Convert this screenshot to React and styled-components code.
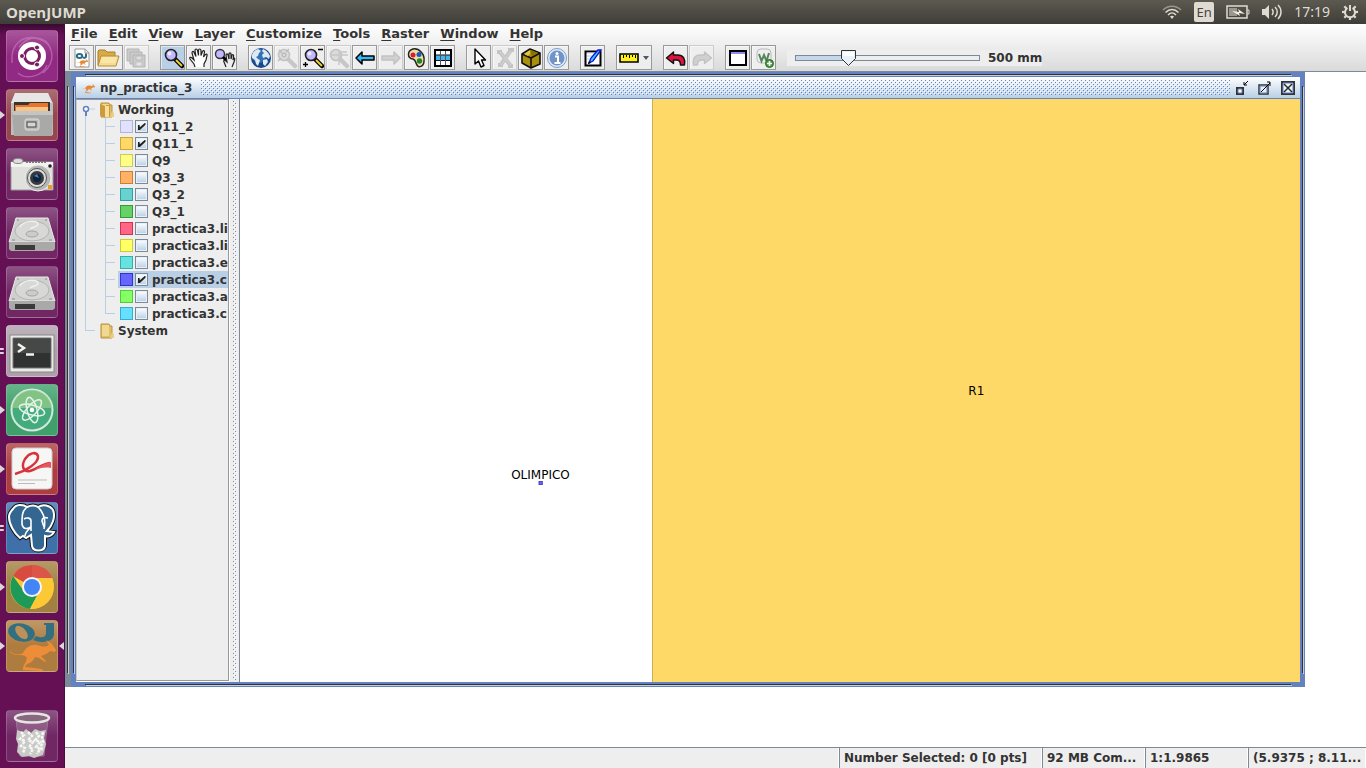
import React, { useState } from "react";
import styled, { createGlobalStyle, css } from "styled-components";

const blue = "#6382bf";
const steel = "#7a8a99";
const pale = "#b8cfe5";
const ink = "#333333";

const GlobalStyle = createGlobalStyle`
  *, *::before, *::after { box-sizing: border-box; }
  body { margin: 0; background: #fff; color: ${ink}; font: bold 12px/16px "DejaVu Sans", sans-serif; }
  button { font: inherit; color: inherit; padding: 0; margin: 0; }
  ul { list-style: none; margin: 0; padding: 0; }
  svg { display: block; flex: none; }
`;

/* Page frame */
const Shell = styled.div`
  display: flex;
  flex-direction: column;
  height: 100vh;
  overflow: hidden;
`;
const Body = styled.div`
  display: flex;
  flex: 1;
  min-height: 0;
`;
const Main = styled.main`
  display: flex;
  flex-direction: column;
  flex: 1;
  min-width: 0;
`;

/* System panel */
const Panel = styled.header`
  display: flex;
  align-items: center;
  justify-content: space-between;
  height: 24px;
  flex: none;
  padding: 0 8px 0 6px;
  color: #dfdbd2;
  background: linear-gradient(#5c5a50, #3e3d38);
`;
const PanelTitle = styled.h1`
  margin: 0;
  font: bold 15px/24px "Open Sans", sans-serif;
`;
const Indicators = styled.div`
  display: flex;
  align-items: center;
  gap: 12px;
  font: 14px/24px "Noto Sans", sans-serif;
`;
const Keyboard = styled.span`
  width: 20px;
  height: 20px;
  border-radius: 2px;
  background: #dfdbd2;
  color: #45433d;
  text-align: center;
  font: 13px/20px "Noto Sans", sans-serif;
`;

/* Launcher */
const Launcher = styled.nav`
  display: flex;
  flex-direction: column;
  gap: 7px;
  width: 65px;
  flex: none;
  padding: 6px 0;
  border-right: 1px solid #4b0c3f;
  background: linear-gradient(#3b0932, #651055 12px, #651055);
`;
const LauncherRow = styled.div`
  display: flex;
  align-items: center;
  height: 52px;
  &:last-child { margin-top: auto; }
`;
const Marks = styled.span`
  display: flex;
  flex-direction: column;
  gap: 2px;
  width: 6px;
`;
const Mark = styled.i`
  border: solid transparent;
  border-width: 4px 0 4px 5px;
  border-left-color: #dcd6da;
  ${(p) => p.$small && css`
    width: 4px;
    height: 2px;
    border: 0;
    border-radius: 0 1px 1px 0;
    background: #dcd6da;
  `}
`;
const ActiveMark = styled.i`
  margin-left: 1px;
  border: solid transparent;
  border-width: 4px 5px 4px 0;
  border-right-color: #dcd6da;
`;
const Tile = styled.button`
  width: 52px;
  height: 52px;
  border: 1px solid rgba(255, 255, 255, 0.18);
  border-radius: 4px;
  background: linear-gradient(rgba(255, 255, 255, 0.22), rgba(255, 255, 255, 0.02) 50%), ${(p) => p.$color};
  svg { margin: -1px; }
`;

/* Menus and tools */
const Top = styled.div`
  flex: none;
  background: linear-gradient(#ffffff, #dadada);
  border-bottom: 1px solid ${steel};
`;
const MenuBar = styled.nav`
  display: flex;
  align-items: flex-start;
  gap: 11px;
  height: 21px;
  padding: 0 6px;
`;
const MenuButton = styled.button`
  border: 0;
  background: none;
  font-size: 13px;
  line-height: 19px;
  &::first-letter { text-decoration: underline; text-underline-offset: 2px; }
`;
const ToolBar = styled.div`
  display: flex;
  align-items: center;
  gap: 11px;
  height: 26px;
  padding: 0 4px 1px;
`;
const ToolGroup = styled.div`
  display: flex;
  gap: 1px;
`;
const Tool = styled.button`
  display: flex;
  align-items: center;
  justify-content: center;
  gap: 4px;
  width: ${(p) => p.$width || 25}px;
  height: 25px;
  border: 1px solid #999;
  background: ${(p) => (p.$on ? pale : "#eeeeee")};
  box-shadow: inset 1px 1px #fff8;
  ${(p) => p.disabled && css`
    border-color: #ccc;
    svg { opacity: 0.75; }
  `}
`;
const Scale = styled.label`
  display: flex;
  align-items: center;
  gap: 8px;
  height: 16px;
  padding-left: 8px;
  background: #eee;
`;
const Slider = styled.span`
  position: relative;
  display: flex;
  width: 185px;
  height: 16px;
`;
const Range = styled.input`
  appearance: none;
  width: 100%;
  height: 16px;
  margin: 0;
  background: none;
  &::-webkit-slider-runnable-track {
    height: 6px;
    border: 1px solid ${steel};
    background: linear-gradient(90deg, #c5d8ec 29%, #eee 29%);
  }
  &::-webkit-slider-thumb { appearance: none; width: 15px; height: 4px; opacity: 0; }
`;
const Knob = styled.svg`
  position: absolute;
  top: 0;
  pointer-events: none;
`;

/* Desktop with its document windows */
const Desktop = styled.section`
  display: flex;
  flex: 1;
  min-height: 0;
  padding: 0 61px 60px 0;
  background: #fff;
`;
const frameLines = css`
  background-image:
    linear-gradient(#333, #333), linear-gradient(#fff9, #fff9),
    linear-gradient(#333, #333), linear-gradient(#fff9, #fff9),
    linear-gradient(#333, #333), linear-gradient(#fff9, #fff9),
    linear-gradient(#333, #333), linear-gradient(#fff9, #fff9);
  background-repeat: no-repeat;
  background-size:
    calc(100% - 28px) 1px, calc(100% - 28px) 1px,
    calc(100% - 28px) 1px, calc(100% - 28px) 1px,
    1px calc(100% - 28px), 1px calc(100% - 28px),
    1px calc(100% - 28px), 1px calc(100% - 28px);
  background-position:
    14px 2px, 15px 3px,
    14px calc(100% - 2px), 15px calc(100% - 1px),
    2px 14px, 3px 15px,
    calc(100% - 2px) 14px, calc(100% - 1px) 15px;
`;
const BackWindow = styled.div`
  display: flex;
  flex: 1;
  min-width: 0;
  padding-left: 6px;
  background-color: ${steel};
  ${frameLines}
`;
const DocWindow = styled.article`
  display: flex;
  flex-direction: column;
  flex: 1;
  min-width: 0;
  padding: 5px;
  background-color: ${blue};
  ${frameLines}
`;
const TitleBar = styled.header`
  display: flex;
  align-items: center;
  gap: 4px;
  height: 22px;
  flex: none;
  padding: 0 4px 0 5px;
  border-bottom: 1px solid ${blue};
  background: linear-gradient(#ffffff, ${pale});
`;
const Title = styled.h2`
  margin: 0;
  font-size: 12px;
  line-height: 20px;
`;
const dot = (color) => `conic-gradient(from 270deg at 1px 1px, ${color} 90deg, transparent 0)`;
const Grip = styled.span`
  flex: 1;
  height: 15px;
  margin-left: 5px;
  background: ${dot(blue)} 0 0 / 4px 4px, ${dot(blue)} 2px 2px / 4px 4px,
    ${dot("#fff")} 1px 1px / 4px 4px, ${dot("#fff")} 3px 3px / 4px 4px;
`;
const WindowButtons = styled.span`
  display: flex;
  gap: 6px;
  margin-left: 2px;
`;
const WindowButton = styled.button`
  border: 0;
  background: none;
`;
const Split = styled.div`
  display: grid;
  grid-template-columns: 153px 10px minmax(0, 1fr);
  flex: 1;
  min-height: 0;
  background: #eee;
`;
const Divider = styled.div`
  width: 4px;
  margin: 2px 0 2px 4px;
  background: ${dot(steel)} 0 0 / 4px 4px, ${dot(steel)} 2px 2px / 4px 4px,
    ${dot("#fff")} 1px 1px / 4px 4px, ${dot("#fff")} 3px 3px / 4px 4px;
`;
const Tree = styled.nav`
  overflow: hidden;
  margin-bottom: 1px;
  padding-top: 1px;
  border: 1px solid #999;
  border-left-color: #ccc;
  box-shadow: 1px 1px #fff;
  background: #eee;
`;
const TreeRow = styled.div`
  display: flex;
  align-items: center;
  height: 17px;
  padding-left: 5px;
  white-space: nowrap;
`;
const FolderLabel = styled.span`
  margin-left: 3px;
`;
const Rail = styled.i`
  flex: none;
  height: 17px;
  width: 20px;
  margin-left: 3px;
  border-left: 1px solid ${pale};
`;
const Elbow = styled.i`
  flex: none;
  height: 17px;
  width: 10px;
  margin: ${(p) => (p.$root ? "0 4px 0 3px" : "0 3px 0 0")};
  background:
    linear-gradient(${pale}, ${pale}) 0 8px / 100% 1px no-repeat,
    linear-gradient(${pale}, ${pale}) 0 0 / 1px ${(p) => (p.$last ? "9px" : "100%")} no-repeat;
`;
const LayerNode = styled.label`
  display: flex;
  align-items: center;
  flex: 1;
  gap: 2px;
  height: 17px;
  padding-left: 2px;
  background: ${(p) => (p.$selected ? pale : "none")};
`;
const LayerName = styled.span`
  margin-left: 2px;
`;
const Swatch = styled.i`
  flex: none;
  width: 13px;
  height: 13px;
  background: ${(p) => p.$fill};
  border: 1px solid ${(p) => p.$line};
`;
const Check = styled.input`
  appearance: none;
  display: grid;
  place-items: center;
  flex: none;
  width: 13px;
  height: 13px;
  margin: 0;
  border: 1px solid ${steel};
  background: linear-gradient(#fff, ${pale});
  box-shadow: inset 0 0 0 1px #e8eff7;
  &:checked::after {
    content: "";
    width: 8px;
    height: 7px;
    background: #222;
    clip-path: polygon(0 28%, 25% 28%, 30% 60%, 90% 0, 100% 0, 100% 25%, 30% 100%, 0 100%);
  }
`;
const MapView = styled.div`
  display: flex;
  min-width: 0;
  border-left: 1px solid ${steel};
  background: #fff;
  color: #000;
  font-weight: normal;
`;
const Region = styled.div`
  display: flex;
  align-items: center;
  justify-content: center;
  flex: 648;
  border-left: 1px solid #ccae54;
  background: #ffd968;
`;
const Blank = styled.div`
  position: relative;
  flex: 412;
`;
const Feature = styled.span`
  position: absolute;
  left: 73%;
  top: 63%;
  display: flex;
  flex-direction: column;
  align-items: center;
  padding-top: 4px;
  line-height: 11px;
  transform: translateX(-50%);
`;
const Point = styled.i`
  width: 4px;
  height: 4px;
  border: 1px solid #4a4ac8;
  background: #6666ff;
`;

/* Status */
const StatusBar = styled.footer`
  display: grid;
  grid-template-columns: 1fr 203px 103px 103px 118px;
  height: 21px;
  flex: none;
  border-top: 1px solid ${steel};
  background: #eee;
`;
const StatusCell = styled.span`
  overflow: hidden;
  padding: 0 4px;
  border-right: 1px solid #fff;
  border-left: 1px solid ${steel};
  line-height: 20px;
  white-space: nowrap;
  &:first-child { border-left: 0; }
`;

/* Icons: toolbar */
const Ico = ({ children, w = 22, h = 22 }) => (
  <svg width={w} height={h} viewBox={`0 0 ${w} ${h}`} fill="none" aria-hidden="true">{children}</svg>
);
const Lens = ({ x = 0, y = 0, off }) => (
  <g transform={`translate(${x} ${y})`}>
    <path d="M12 12l7 7" stroke={off ? "#bbb" : "#000"} strokeWidth="4.500" strokeLinecap="round" />
    {!off && <path d="M13 13l6 6" stroke="#f3cf2d" strokeWidth="2" />}
    <circle cx="8" cy="8" r="5.500" fill={off ? "#d5d5d5" : "#c3b8ff"} stroke={off ? "#b5b5b5" : "#222"} strokeWidth="1.600" />
    {!off && <circle cx="6.500" cy="6.500" r="2" fill="#eeeaff" />}
  </g>
);
const Hand = () => (
  <path d="M7 20l-1-3-4-5c-1-2 1-2 2-1l2 2-2-7c0-2 2-2 2-.500l2 4-1-6c0-2 2-2 2.500 0l1 5V3.500c0-2 2-2 2.500 0v5l1.500-4c1-1.500 2-1 2 .500l-1 5 2-2.500c1-1 2 0 1.500 1L18 13l-2 4v3" fill="#fff" stroke="#222" strokeWidth="1.200" />
);
const Arrow = ({ off, flip }) => (
  <g transform={flip ? "matrix(-1 0 0 1 22 0)" : undefined}>
    <path d="M2 11l6-6v4h12v4H8v4z" fill={off ? "#c8c8c8" : "#39b5f5"} stroke={off ? "#b4b4b4" : "#000"} strokeWidth="1.500" strokeLinejoin="round" />
  </g>
);
const Curl = ({ off, flip }) => (
  <g transform={flip ? "matrix(-1 0 0 1 22 0)" : undefined}>
    <path d="M1.500 11l7-6v3h4c6 0 8 4 7 10h-4c0-3-1-5-4-5h-3v3.500z" fill={off ? "#c6c6c6" : "#dc143c"} stroke={off ? "#b4b4b4" : "#111"} strokeWidth="1.400" strokeLinejoin="round" />
  </g>
);
const Roo = ({ s = 1, x = 0, y = 0, c = "#e88a34" }) => (
  <path transform={`translate(${x} ${y}) scale(${s})`} fill={c}
    d="M0 10c3 4 9 6 14 3 3-6 8-9 14-8 4 1 8 3 12 0l-3-5 6 4 4 6-1 2-5-1c-3 3-6 4-9 5l5 5-1 1-6-4-4-1c-2 4-4 6-8 7l-2 3 17 2 1 2-20-1c-1-3 3-7 4-12-2-3-5-3-8-3-5 0-9-2-10-5z" />
);
const icons = {
  fresh: <><path d="M4 2h10l4 4v14H4z" fill="#fff" stroke="#999" /><path d="M14 2v4h4" stroke="#999" /><ellipse cx="8.500" cy="9" rx="2.700" ry="2" stroke="#2e6e84" strokeWidth="2" /><path d="M15 6.500V9c0 2-1 2-3 1.500" stroke="#2e6e84" strokeWidth="2" /><Roo s={0.26} x={5} y={12} /></>,
  open: <><path d="M1 18V4l1-1h6l2 2h8v4" fill="#d9ab45" stroke="#a88031" /><path d="M4 9h18l-3 10H1z" fill="#f7dc8c" stroke="#b48d3d" /><path d="M5 10h15l-2 6H3z" fill="#fbe9b4" opacity=".7" /></>,
  save: <>{[0, 3, 6].map((d) => <path key={d} d={`M${1 + d} ${2 + d}h12v12H${1 + d}z`} fill="#c0c0c0" stroke="#a2a2a2" />)}<path d="M10 9h6v4h-6z" fill="#d8d8d8" stroke="#aaa" /><path d="M10 15h6v4h-6z" fill="#e3e3e3" stroke="#b5b5b5" /></>,
  zoom: <Lens x={1} />,
  pan: <Hand />,
  zoompan: <><circle cx="6" cy="7" r="4.500" fill="#c3b8ff" stroke="#333" strokeWidth="1.400" /><path d="M9 10l3 3" stroke="#000" strokeWidth="3" /><path d="M12 20l-2-5c-1-2 1-2 2-1l1 1-1-7c0-1.500 2-1.500 2 0l1 4V7c0-1.500 2-1.500 2 0v5l1-4c1-1 2 0 1.500 1.500L19 13l1-2c1 0 1 1 0 4l-2 5" fill="#eee" stroke="#222" strokeWidth="1.200" /></>,
  globe: <><circle cx="11" cy="11" r="10" fill="#17498c" /><circle cx="9" cy="9" r="7" fill="#3f83c9" opacity=".7" /><path d="M2 8c1-3 3-5 6-6l3 2-2 2-1 3-2 1 2 2 2 1-1 3-1 3-2-2-1-4-3-2zM13 2c3 1 5 3 7 7l-1 3-3-2-3 1-1-3 2-2-2-2zM13 13l4-1 1 3-3 4-2-2z" fill="#dfe9f1" /></>,
  zoomsel: <><Lens off /><circle cx="8" cy="8" r="2" stroke="#999" /><path d="M3 3l3 3m4-1l3-3M5 11l-3 3" stroke="#aaa" strokeWidth="1.300" /></>,
  zoominout: <><Lens x={1} /><path d="M16 2.500h5M1 17.500h5M3.500 15v5" stroke="#000" strokeWidth="1.300" /></>,
  zoomregion: <><Lens off /><path d="M2 8h18M11 5v13M11 5h8" stroke="#bbb" strokeWidth="1.500" /></>,
  back: <Arrow />,
  next: <Arrow flip off />,
  palette: <><path d="M7 2C13 1 19 7 18 14c0 6-6 7-7 4-2-3-1-5-4-6C1 11 1 4 7 2z" fill="#f0df9c" stroke="#222" strokeWidth="1.500" /><circle cx="7" cy="8" r="2.500" fill="#d81b41" /><circle cx="13" cy="7.500" r="2.500" fill="#1e56c5" /><circle cx="13.500" cy="14" r="2.700" fill="#20872b" /></>,
  table: <><path d="M3 3h16v16H3z" fill="#fff" stroke="#000" strokeWidth="2" /><path d="M4 8h14v5H4z" fill="#43b5ee" /><path d="M3 8h16M3 13.500h16" stroke="#111" /><path d="M8.500 4v14M13.500 4v14" stroke="#555" /></>,
  cursor: <path d="M7 2v15l3.500-3 2.500 6 3-1.500-2.500-5.500h4z" fill="#fff" stroke="#000" strokeWidth="1.400" strokeLinejoin="round" />,
  cut: <><path d="M5 4l12 15M17 3L6 19M3 5h5M14 3h6M4 18h5M14 19h5" stroke="#b8b8b8" strokeWidth="4" /><path d="M6 5l11 13M17 4L7 18" stroke="#ccc" /></>,
  box: <><path d="M2 7l8-5 10 4v11l-9 4-9-5z" fill="#ab8f09" stroke="#111" strokeWidth="1.600" strokeLinejoin="round" /><path d="M2 7l9 4 9-5M11 11v10" stroke="#111" strokeWidth="1.600" /><path d="M4 7l6-4v4l-2 2z" fill="#dfc743" /><path d="M11 3l7 3-6 3-1-2z" fill="#8b7303" /></>,
  info: <><circle cx="11" cy="11" r="9.500" fill="#e1eaf5" stroke="#7b9dcc" /><circle cx="11" cy="11" r="7.500" fill="#6f94c8" /><path d="M9 9.500h3V16m-3.500 0h6" stroke="#fff" strokeWidth="2" /><circle cx="11" cy="6.500" r="1.500" fill="#fff" /></>,
  edit: <><path d="M3.500 4.500h15v14h-15z" fill="#fff" stroke="#000" strokeWidth="2" /><path d="M5 6h9M5 9h6M5 12h3" stroke="#bcd" /><path d="M16 3h3l-8 11-4 2 2-5z" fill="#36d0f6" stroke="#1010d8" strokeWidth="1.300" /><path d="M6 17l3-1-2-2z" fill="#000" /></>,
  undo: <Curl />,
  redo: <Curl flip off />,
  windowed: <><path d="M3 4h16v14H3z" fill="#fff" stroke="#000" strokeWidth="2" /><path d="M4 6h14" stroke="#8d8df0" strokeWidth="2" /></>,
  wizard: <><rect x="4" y="2" width="14" height="14" rx="4" fill="#eee" stroke="#bbb" /><path d="M6 7l2.500 7 2.500-6 2.500 6L16 6" stroke="#55855c" strokeWidth="2" /><circle cx="16.500" cy="16.500" r="4" fill="#45963b" stroke="#2c7026" /><path d="M14 16.500h5M16.500 14v5" stroke="#fff" strokeWidth="1.600" /></>,
};
const Ruler = () => (
  <Ico w={20}>
    <path d="M1 7h18v8H1z" fill="#fff11c" stroke="#000" strokeWidth="1.600" />
    <path d="M4.500 8v3M7.500 8v2M10.500 8v3M13.500 8v2M16.500 8v3" stroke="#000" />
  </Ico>
);
const Caret = () => <svg width="6" height="4" viewBox="0 0 6 4" aria-hidden="true"><path d="M0 0h6L3 4z" fill="#4d5966" /></svg>;

/* Icons: launcher */
const Drive = () => (
  <>
    <path d="M10 11h32l7 24H3z" fill="#cfcfce" stroke="#e8e8e8" />
    <path d="M3 35h46v7l-2 2H5l-2-2z" fill="#a9a9a8" />
    <path d="M9 38h20v5H9z" fill="#3a3a3a" />
    <ellipse cx="26" cy="24" rx="17" ry="10" fill="#d8d8d7" stroke="#b4b4b3" />
    <ellipse cx="26" cy="27" rx="6" ry="3" fill="#ccc" stroke="#a5a5a5" />
    <path d="M14 20c3-7 18-7 18-3 0 3-6 3-8 5" stroke="#f0f0ef" strokeWidth="1.500" />
    <path d="M6 33h3M43 33h3M11 13h2M39 13h2" stroke="#8c8c8c" />
  </>
);
const elephant = "M7 7c3-5 10-5 14-2 4-2 8-2 11 0 5-3 12-2 15 3 3 7-1 16-6 21l7 1c-2 4-6 5-9 4v10c-1 6-12 6-13 0l-1-11-5 3-3-2-3 2C8 31 3 22 3 15c0-3 2-6 4-8z";
const apps = [
  { name: "Dash", color: "#8f2680", art: <><path d="M6 33C4 14 17 4 33 9s17 23 4 34M45 20C40 4 22 5 13 17M12 43c8 7 24 4 29-8" stroke="#d083c5" strokeWidth="1.500" opacity=".55" /><circle cx="26" cy="26" r="14" fill="#fff" /><circle cx="26" cy="26" r="7.500" stroke="#7a2060" strokeWidth="3" />{[[16, 26], [31, 17.500], [31, 34.500]].map(([x, y]) => <circle key={`${x}${y}`} cx={x} cy={y} r="2.500" fill="#7a2060" stroke="#fff" />)}</> },
  { name: "Files", color: "#95424b", marks: 1, art: <><path d="M9 4h33l5 10v32H5V14z" fill="#bdbdbb" /><path d="M9 4h33l4 10H5z" fill="#e6e6e4" /><path d="M8 13h36v12H8z" fill="#3a3531" /><path d="M9 16h13l2-2h18v9H9z" fill="#e9742c" /><path d="M10 18h32v4H10z" fill="#f7c489" /><path d="M6 22h41l-1 25H8z" fill="#a9a9a7" /><path d="M6 22h41v4H7z" fill="#c4c4c2" /><rect x="19" y="30" width="14" height="11" rx="2" fill="#bbb" stroke="#ddd" /><rect x="21" y="33" width="9" height="5" fill="#d5d5d5" stroke="#444" /></> },
  { name: "Camera", color: "#6d2361", art: <><path d="M5 14h42v28H5z" fill="#e0e0dd" stroke="#999" /><path d="M5 14h42v5H5z" fill="#f2f2ee" /><ellipse cx="12" cy="13" rx="5" ry="2.500" fill="#ddd" stroke="#888" /><path d="M20 14h20" stroke="#777" strokeDasharray="2 1" strokeWidth="2" /><circle cx="32" cy="30" r="13" fill="#b6b6b4" stroke="#eee" /><circle cx="31" cy="30" r="9.500" fill="#dcdcda" stroke="#555" /><circle cx="31" cy="30" r="7" fill="#37393c" /><circle cx="31" cy="30" r="4" fill="#0d2241" /><path d="M28 28l3-2 2 4z" fill="#4b84bd" /><circle cx="44" cy="18" r="1.800" fill="#222" /><path d="M42 37h4v4h-4z" fill="#eb9a23" /></> },
  { name: "Disk 1", color: "#6d2361", art: <Drive /> },
  { name: "Disk 2", color: "#6d2361", art: <Drive /> },
  { name: "Terminal", color: "#ac9da9", marks: 2, art: <><path d="M4 10h44v37H4z" fill="#e8e8e4" stroke="#888" /><path d="M7 13h38v30H7z" fill="#303231" stroke="#777" /><path d="M8 14h36v14H8z" fill="#454847" /><path d="M12 19l6 4-6 4" stroke="#f3f3ee" strokeWidth="2.500" /><path d="M20 29.500h8" stroke="#f3f3ee" strokeWidth="2.500" /></> },
  { name: "Atom", color: "#3c9e68", marks: 1, art: <><circle cx="26" cy="26" r="20.500" fill="#43ab7e" stroke="#d5e8df" strokeWidth="2" /><path d="M6 24C8 0 44 0 46 24z" fill="#a1cf89" opacity=".65" />{[15, 75, 132].map((a) => <ellipse key={a} cx="26" cy="26" rx="13" ry="5" transform={`rotate(${a} 26 26)`} stroke="#e2f4ea" strokeWidth="1.500" />)}<circle cx="26" cy="26" r="2.300" fill="#fff" /></> },
  { name: "Evince", color: "#ab393a", marks: 1, art: <><rect x="6" y="5" width="40" height="41" rx="4" fill="#f6f6f5" stroke="#ccc" /><path d="M9 31C20 28 33 20 32 13c-2-5-9-3-13 3-4 7-2 13 5 12 8-2 11-7 20-8" stroke="#d8333c" strokeWidth="2.500" /><path d="M28 27c5-3 9-6 17-8v6c-6-1-11 0-17 2z" fill="#e5565c" /><path d="M12 37h29M12 40.500h17" stroke="#bbb" /></> },
  { name: "pgAdmin", color: "#3c6da8", marks: 2, art: <><path d={elephant} fill="#336791" stroke="#111" strokeWidth="4" /><path d={elephant} fill="#336791" stroke="#fff" strokeWidth="2" /><path d="M21 5c-5 4-5 9-5 17 1 6 6 5 9 3-3 3-6 5-6 9M32 5c6 6 8 13 6 22M18 17c3-2 7-1 7 2v10M42 16c-4-1-6 0-6 3l2 6" stroke="#fff" strokeWidth="1.600" /></> },
  { name: "Chrome", color: "#a07d3d", marks: 1, art: <><circle cx="26" cy="26" r="22" fill="#fcc934" /><path d="M26 26L7 15C15-1 40 1 46 17z" fill="#d74b40" /><path d="M26 4c9 0 17 5 20 13H26z" fill="#db5549" /><path d="M7 15c-8 16 3 31 17 33l9-17-13 2z" fill="#1d9a58" /><path d="M26 17h20c6 16-6 32-22 31l9-17z" fill="#fcc934" /><circle cx="26" cy="26" r="10" fill="#f5f5f5" /><circle cx="26" cy="26" r="8" fill="#4285f4" /></> },
  { name: "OpenJUMP", color: "#ad793b", marks: 1, active: true, art: <><ellipse cx="15.500" cy="12.500" rx="13.500" ry="9" transform="rotate(12 15.500 12.500)" fill="#326f80" /><ellipse cx="15.500" cy="12.500" rx="8" ry="4.500" transform="rotate(48 15.500 12.500)" fill="#bb9059" /><path d="M38 3h10v11c0 8-12 10-21 6l3-4c5 2 10 2 10-3V5h-2z" fill="#326f80" /><Roo x={3} y={20} c="#ed8d37" /></> },
  { name: "Trash", color: "#6d2361", art: <><path d="M10 8h32l-4 38H14z" fill="#a77b9f" opacity=".5" stroke="#bbb" /><path d="M11 20l6 2 3-3 5 4 4-4 5 2 6-1-2 8 2 6-3 11-9 3-5-2-7 1-5-5 1-8-2-5z" fill="#c9c9c6" /><path d="M15 22l3 3-4 4 5 2-4 5 4 2-2 5M22 22l4 4-4 4 5 2-4 5 4 2-3 5M30 22l3 4-4 4 5 2-4 5 4 2-3 5M37 22l-1 5 1 5-2 4 1 5" stroke="#f6f6f4" strokeWidth="2.500" strokeDasharray="3 1" /><ellipse cx="26" cy="8" rx="17" ry="4.500" fill="#89687f" stroke="#e5e5e2" strokeWidth="2.500" /></> },
];

const Folder = ({ open }) => (
  <svg width="16" height="16" viewBox="0 0 16 16" aria-hidden="true">
    <path d="M2 1h8l1 2h2v12H2z" fill="#e3bf6b" stroke="#b8923e" />
    <path d="M3 2h7v11H3z" fill="#f2d992" />
    {open && <path d="M1 2l5 2v12l-5-3zM7 3h4v11H7z" fill="#c99b3e" />}
    {open && <path d="M6 4h4v11H6z" fill="#f6df9c" />}
    <path d="M13 9l2 2v4h-4z" fill="#eacd80" />
  </svg>
);

const toolGroups = [
  [["fresh", "New"], ["open", "Open", { width: 28 }], ["save", "Save", { off: true }]],
  [["zoom", "Zoom", { on: true }], ["pan", "Pan"], ["zoompan", "Zoom or pan"]],
  [["globe", "Full extent"], ["zoomsel", "Zoom to selection", { off: true }], ["zoominout", "Zoom in or out"], ["zoomregion", "Zoom to region", { off: true }], ["back", "Previous view"], ["next", "Next view", { off: true }], ["palette", "Styles"], ["table", "Attributes"]],
  [["cursor", "Select"], ["cut", "Clear selection", { off: true }], ["box", "Fence"], ["info", "Feature info"]],
  [["edit", "Editing"]],
  "measure",
  [["undo", "Undo"], ["redo", "Redo", { off: true }]],
  [["windowed", "Output window"], ["wizard", "Wizard"]],
];
const menus = ["File", "Edit", "View", "Layer", "Customize", "Tools", "Raster", "Window", "Help"];
const layers = [
  ["Q11_2", "#e0e0ff", "#b4b4d2", true],
  ["Q11_1", "#ffd966", "#d0a43a", true],
  ["Q9", "#ffff84", "#cccc55"],
  ["Q3_3", "#ffb266", "#cc7f33"],
  ["Q3_2", "#66d3d0", "#33a09d"],
  ["Q3_1", "#66d166", "#339c33"],
  ["practica3.li", "#ff6685", "#cc3352"],
  ["practica3.li", "#ffff66", "#cccc33"],
  ["practica3.e", "#66e3e0", "#33b0ad"],
  ["practica3.c", "#6666ff", "#3333cc", true, true],
  ["practica3.a", "#85ff66", "#52cc33"],
  ["practica3.c", "#66e0ff", "#33add0"],
];

function LayerRow({ layer: [name, fill, line, on, selected], last }) {
  const [checked, setChecked] = useState(!!on);
  return (
    <li>
      <TreeRow>
        <Rail />
        <Elbow $last={last} />
        <LayerNode $selected={selected}>
          <Swatch $fill={fill} $line={line} />
          <Check type="checkbox" checked={checked} onChange={(e) => setChecked(e.target.checked)} />
          <LayerName>{name}</LayerName>
        </LayerNode>
      </TreeRow>
    </li>
  );
}

function ScaleSlider() {
  const [value, setValue] = useState(29);
  return (
    <Scale>
      <Slider>
        <Range type="range" min="0" max="100" value={value} aria-label="Scale" onChange={(e) => setValue(+e.target.value)} />
        <Knob width="15" height="16" viewBox="0 0 15 16" style={{ left: `calc(${value}% - 8px)` }}>
          <path d="M.5 .5h14v8L7.500 15.500.5 8.500z" fill="#e8f0f9" stroke="#333" />
          <path d="M2 2h11v4H2z" fill="#fff" />
        </Knob>
      </Slider>
      500 mm
    </Scale>
  );
}

export default function App() {
  return (
    <Shell>
      <GlobalStyle />
      <Panel>
        <PanelTitle>OpenJUMP</PanelTitle>
        <Indicators>
          <svg width="20" height="14" viewBox="0 0 20 14" fill="none" stroke="#dfdbd2" strokeWidth="1.500"><path d="M1 5c5-5 13-5 18 0" opacity=".5" /><path d="M3.500 7.500c4-4 9-4 13 0M6 10c3-3 5-3 8 0" /><path d="M8 11.500c1-1 3-1 4 0L10 14z" fill="#dfdbd2" stroke="none" /></svg>
          <Keyboard>En</Keyboard>
          <svg width="24" height="14" viewBox="0 0 24 14" fill="none"><path d="M1 1h20v12H1z" stroke="#dfdbd2" strokeWidth="1.500" /><path d="M21.500 5H23v4h-1.500" stroke="#dfdbd2" /><path d="M3 3h8v8H3z" fill="#99968d" /><path d="M6 6l7 1-1-3 7 5-6-1 1 3z" fill="#f2efe8" /></svg>
          <svg width="20" height="16" viewBox="0 0 20 16" fill="none"><path d="M0 5h3l4-4v14l-4-4H0z" fill="#dfdbd2" /><path d="M10 5c1.500 2 1.500 4 0 6M13 3c3 3 3 7 0 10M16 1c4 4 4 10 0 14" stroke="#dfdbd2" strokeWidth="1.500" /></svg>
          <time>17:19</time>
          <svg width="16" height="16" viewBox="0 0 16 16" fill="none" stroke="#dfdbd2"><path d="M5.500 4a5 5 0 1 0 5 0M8 1v6" strokeWidth="2" />{[45, 90, 135, 180, 225, 270, 315].map((a) => <path key={a} d="M8 0v3" strokeWidth="2.200" transform={`rotate(${a} 8 8)`} />)}</svg>
        </Indicators>
      </Panel>
      <Body>
        <Launcher aria-label="Launcher">
          {apps.map((a) => (
            <LauncherRow key={a.name}>
              <Marks>{Array.from({ length: a.marks || 0 }, (_, i) => <Mark key={i} $small={a.marks === 2} />)}</Marks>
              <Tile $color={a.color} aria-label={a.name}><Ico w={52} h={52}>{a.art}</Ico></Tile>
              {a.active && <ActiveMark />}
            </LauncherRow>
          ))}
        </Launcher>
        <Main>
          <Top>
            <MenuBar>{menus.map((m) => <MenuButton key={m}>{m}</MenuButton>)}</MenuBar>
            <ToolBar>
              {toolGroups.map((group, i) => (
                <ToolGroup key={i}>
                  {group === "measure"
                    ? <Tool $width={36} aria-label="Measure"><Ruler /><Caret /></Tool>
                    : group.map(([id, label, o = {}]) => (
                      <Tool key={id} aria-label={label} $on={o.on} $width={o.width} disabled={o.off}><Ico w={id === "open" ? 24 : 22}>{icons[id]}</Ico></Tool>
                    ))}
                </ToolGroup>
              ))}
              <ScaleSlider />
            </ToolBar>
          </Top>
          <Desktop>
            <BackWindow>
              <DocWindow>
                <TitleBar>
                  <svg width="15" height="12" viewBox="0 0 15 12"><Roo s={0.3} y={2} /></svg>
                  <Title>np_practica_3</Title>
                  <Grip />
                  <WindowButtons>
                    <WindowButton aria-label="Minimize"><svg width="16" height="16" viewBox="0 0 16 16" fill="none"><path d="M1 8h6v6H1z" stroke="#333" strokeWidth="2" /><path d="M2 9h4v4H2z" stroke={blue} fill="#fff" /><path d="M12 1L8 5m0-3v3h3" stroke="#000" /></svg></WindowButton>
                    <WindowButton aria-label="Maximize"><svg width="16" height="16" viewBox="0 0 16 16" fill="none"><path d="M1 5h9v9H1z" stroke="#333" strokeWidth="1.500" /><path d="M2 6h7v7H2z" stroke={blue} fill="#e8f0f9" /><path d="M3 12l9-9M9 2h3v4" stroke="#000" /></svg></WindowButton>
                    <WindowButton aria-label="Close"><svg width="16" height="16" viewBox="0 0 16 16" fill="none"><path d="M2 2h12v12H2z" stroke="#333" strokeWidth="2" /><path d="M3 3h10v10H3z" stroke={blue} fill="#e8f0f9" /><path d="M4 4l8 8M12 4l-8 8" stroke="#222" strokeWidth="1.400" /></svg></WindowButton>
                  </WindowButtons>
                </TitleBar>
                <Split>
                  <Tree aria-label="Layers">
                    <ul>
                      <li>
                        <TreeRow>
                          <svg width="17" height="17" viewBox="0 0 17 17" fill="none"><path d="M7 8h6M3.500 12v5" stroke={pale} /><circle cx="4" cy="8" r="2.500" stroke={blue} strokeWidth="1.500" fill="#fff" /><path d="M4 10v5" stroke={blue} strokeWidth="2" /></svg>
                          <Folder open />
                          <FolderLabel>Working</FolderLabel>
                        </TreeRow>
                        <ul>{layers.map((l, i) => <LayerRow key={i} layer={l} last={i === layers.length - 1} />)}</ul>
                      </li>
                      <li>
                        <TreeRow><Elbow $root $last /><Folder /><FolderLabel>System</FolderLabel></TreeRow>
                      </li>
                    </ul>
                  </Tree>
                  <Divider />
                  <MapView>
                    <Blank><Feature>OLIMPICO<Point /></Feature></Blank>
                    <Region>R1</Region>
                  </MapView>
                </Split>
              </DocWindow>
            </BackWindow>
          </Desktop>
          <StatusBar>
            <StatusCell />
            <StatusCell>Number Selected: 0 [0 pts]</StatusCell>
            <StatusCell>92 MB Com...</StatusCell>
            <StatusCell>1:1.9865</StatusCell>
            <StatusCell>(5.9375 ; 8.11...</StatusCell>
          </StatusBar>
        </Main>
      </Body>
    </Shell>
  );
}
